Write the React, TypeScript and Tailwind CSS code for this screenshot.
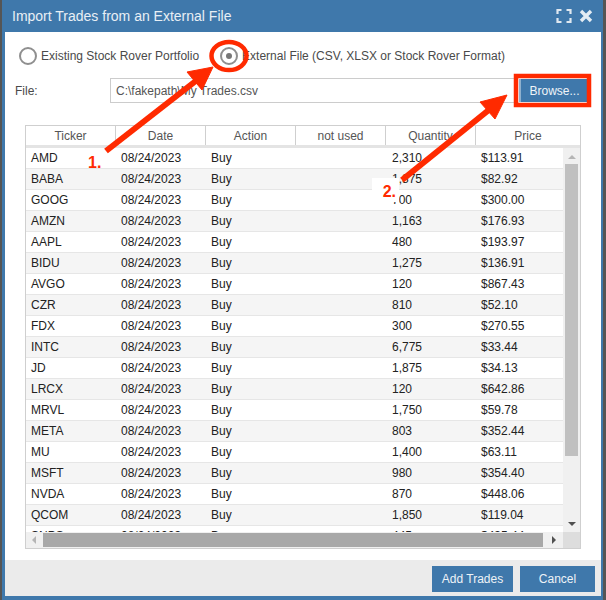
import React from "react";

const trades = [
  ["AMD", "2,310", "$113.91"],
  ["BABA", "1,875", "$82.92"],
  ["GOOG", "700", "$300.00"],
  ["AMZN", "1,163", "$176.93"],
  ["AAPL", "480", "$193.97"],
  ["BIDU", "1,275", "$136.91"],
  ["AVGO", "120", "$867.43"],
  ["CZR", "810", "$52.10"],
  ["FDX", "300", "$270.55"],
  ["INTC", "6,775", "$33.44"],
  ["JD", "1,875", "$34.13"],
  ["LRCX", "120", "$642.86"],
  ["MRVL", "1,750", "$59.78"],
  ["META", "803", "$352.44"],
  ["MU", "1,400", "$63.11"],
  ["MSFT", "980", "$354.40"],
  ["NVDA", "870", "$448.06"],
  ["QCOM", "1,850", "$119.04"],
  ["SNPS", "445", "$435.44"],
];

const columns = ["Ticker", "Date", "Action", "not used", "Quantity"];

const Radio = ({ checked }: { checked?: boolean }) => (
  <span className="flex h-[18px] w-[18px] shrink-0 items-center justify-center rounded-full border-2 border-[#8f8f8f] bg-white">
    {checked && <span className="h-[6px] w-[6px] rounded-full bg-[#777777]" />}
  </span>
);

const App: React.FC = () => {
  return (
    <div className="relative h-[600px] w-[606px] overflow-hidden border-l-2 border-r-[3px] border-[#555555] bg-[#3f78ab] font-['Liberation_Sans',Arial,sans-serif] text-[12px]">
      <div className="flex h-full flex-col pl-[3px] pr-[2px] pb-[4px]">
        {/* Title bar */}
        <div className="flex h-[32px] shrink-0 items-center justify-between pl-[7px] pr-[8px] text-[14px] text-[#e8eff5]">
          <span>Import Trades from an External File</span>
          <div className="flex items-center gap-[7px]">
            <svg width="16" height="16" viewBox="0 0 16 16" fill="none" stroke="#dfe8f0" strokeWidth="2.2">
              <path d="M1.5 6V2h4M10.5 2h4v4M14.5 10v4h-4M5.5 14h-4v-4" />
            </svg>
            <svg width="14" height="14" viewBox="0 0 14 14" fill="none" stroke="#e4ecf3" strokeWidth="3.4">
              <path d="M2 2l10 10M12 2L2 12" />
            </svg>
          </div>
        </div>

        {/* Body */}
        <div className="flex min-h-0 flex-1 flex-col bg-white">
          <div className="flex h-[46px] shrink-0 items-center pl-[14px] pt-[1px] text-[#4a4a4a]">
            <Radio />
            <span className="ml-[4px]">Existing Stock Rover Portfolio</span>
            <span className="ml-[21px]">
              <Radio checked />
            </span>
            <span className="ml-[4px]">External File (CSV, XLSX or Stock Rover Format)</span>
          </div>

          <div className="flex h-[25px] shrink-0 items-center pl-[10px] text-[#4a4a4a]">
            <span className="w-[95px]">File:</span>
            <div className="flex h-[25px] w-[405px] items-center border border-[#cccccc] pl-[5px] text-[#555555]">
              C:\fakepath\My Trades.csv
            </div>
            <button className="ml-[4px] h-[23px] w-[69px] border-l-2 border-[#8fb0cd] bg-[#3f78ab] text-[12px] text-[#f0f4f8]">
              Browse...
            </button>
          </div>

          {/* Grid */}
          <div className="ml-[20px] mt-[22px] flex h-[424px] w-[556px] shrink-0 flex-col border border-[#cfcfcf]">
            <div className="flex h-[22px] shrink-0 border-b-[3px] border-[#e4e4e4] text-[#555555]">
              {columns.map((c) => (
                <div key={c} className="flex w-[90px] shrink-0 items-center justify-center border-r border-[#cfcfcf]">
                  {c}
                </div>
              ))}
              <div className="flex flex-1 items-center justify-center">Price</div>
            </div>

            <div className="flex min-h-0 flex-1">
              <div className="min-w-0 flex-1 overflow-hidden">
                {trades.map((t, i) => (
                  <div
                    key={t[0]}
                    className={`flex h-[21px] items-center border-b border-[#e6e6e6] text-[#222222] ${
                      i % 2 === 1 ? "bg-[#f5f5f5]" : "bg-white"
                    }`}
                  >
                    <div className="w-[90px] shrink-0 pl-[5px]">{t[0]}</div>
                    <div className="w-[90px] shrink-0 pl-[5px]">08/24/2023</div>
                    <div className="w-[180px] shrink-0 pl-[5px]">Buy</div>
                    <div className="w-[90px] shrink-0 pl-[6px]">{t[1]}</div>
                    <div className="flex-1 pl-[5px]">{t[2]}</div>
                  </div>
                ))}
              </div>
              {/* Vertical scrollbar */}
              <div className="flex w-[17px] shrink-0 flex-col items-center bg-[#f0f0f0]">
                <span className="mt-[7px] h-0 w-0 border-x-[4px] border-b-[4px] border-x-transparent border-b-[#b5b5b5]" />
                <div className="mt-[5px] h-[292px] w-[13px] bg-[#c0c0c0]" />
                <span className="mt-auto mb-[6px] h-0 w-0 border-x-[4px] border-t-[4px] border-x-transparent border-t-[#505050]" />
              </div>
            </div>

            {/* Horizontal scrollbar */}
            <div className="flex h-[16px] shrink-0 items-center bg-[#f0f0f0]">
              <span className="ml-[6px] h-0 w-0 border-y-[4px] border-r-[4px] border-y-transparent border-r-[#b5b5b5]" />
              <div className="ml-[7px] h-[14px] w-[500px] bg-[#a8a8a8]" />
              <span className="ml-[9px] h-0 w-0 border-y-[4px] border-l-[4px] border-y-transparent border-l-[#505050]" />
              <div className="ml-auto h-full w-[17px] bg-[#dddddd]" />
            </div>
          </div>
        </div>

        {/* Footer */}
        <div className="flex h-[36px] shrink-0 items-center justify-end gap-[7px] bg-[#ebebeb] pr-[6px] pt-[2px] text-[12px] text-[#eef3f7]">
          <button className="h-[26px] w-[81px] bg-[#3f78ab]">Add Trades</button>
          <button className="h-[26px] w-[75px] bg-[#3f78ab]">Cancel</button>
        </div>
      </div>

      {/* Annotations */}
      <svg className="pointer-events-none absolute left-[-2px] top-0" width="606" height="600" fill="none">
        <ellipse cx="229" cy="56" rx="17.5" ry="14" stroke="#ff2a00" strokeWidth="4.5" />
        <rect x="516" y="76" width="73" height="29" stroke="#ff2a00" strokeWidth="4.5" />
        <path d="M106 151L197 80" stroke="#ff2a00" strokeWidth="6" />
        <path d="M213 67L187 72L202 90Z" fill="#ff2a00" stroke="#ff2a00" strokeWidth="1" />
        <path d="M402 180L490 109" stroke="#ff2a00" strokeWidth="6" />
        <path d="M507 95L480 102L495 119Z" fill="#ff2a00" stroke="#ff2a00" strokeWidth="1" />
      </svg>
      <span className="absolute left-[86px] top-[153px] text-[16px] font-bold leading-[20px] text-[#ff2a00]">1.</span>
      <span className="absolute left-[370px] top-[178px] flex h-[24px] w-[27px] justify-end bg-white pr-[3px] pt-[4px] text-[16px] font-bold leading-[20px] text-[#ff2a00]">2.</span>
    </div>
  );
};

export default App;
